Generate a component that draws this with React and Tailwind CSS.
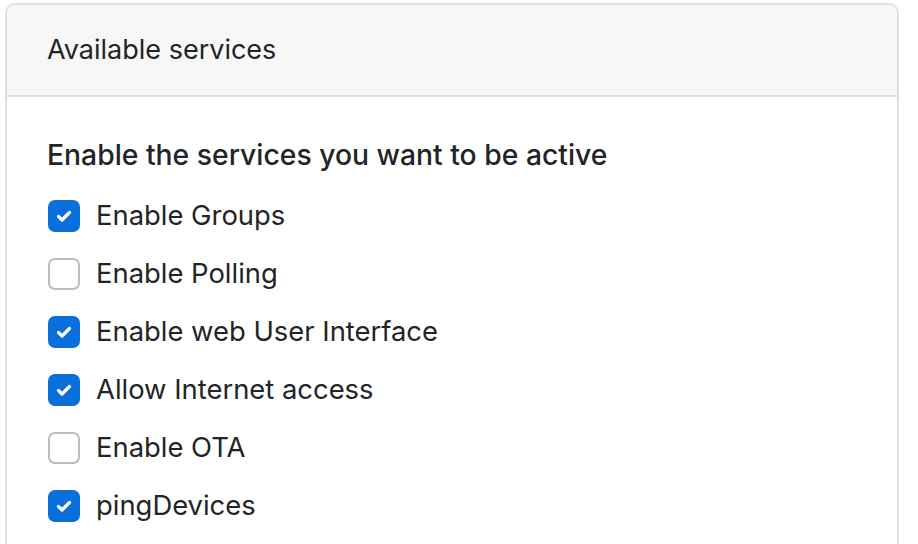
const services = [
  { id: 'groups', label: 'Enable Groups', checked: true },
  { id: 'polling', label: 'Enable Polling', checked: false },
  { id: 'webui', label: 'Enable web User Interface', checked: true },
  { id: 'internet', label: 'Allow Internet access', checked: true },
  { id: 'ota', label: 'Enable OTA', checked: false },
  { id: 'ping', label: 'pingDevices', checked: true },
];

function Check({ checked }) {
  if (!checked) {
    return <span className="w-[32px] h-[32px] rounded-[7px] border-2 border-[#b8bfc6] bg-white shrink-0" />;
  }
  return (
    <span className="w-[32px] h-[32px] rounded-[7px] bg-[#0b6fdb] flex items-center justify-center shrink-0">
      <svg width="18" height="18" viewBox="0 0 18 18" fill="none">
        <path d="M3.5 9.5l3.5 3.5 7.5-7.5" stroke="white" strokeWidth="3.2" strokeLinecap="round" strokeLinejoin="round" />
      </svg>
    </span>
  );
}

export default function App() {
  return (
    <div className="w-[918px] h-[544px] overflow-hidden bg-white text-[#212529]" style={{ fontFamily: 'Inter, "Noto Sans", sans-serif' }}>
      <div className="ml-[5px] mt-[3px] w-[894px] border-2 border-[#dfdfdf] rounded-[10px] overflow-hidden">
        <div className="h-[92px] bg-[#f7f7f7] border-b-2 border-[#dfdfdf] flex items-center px-[40px] text-[27px]">
          Available services
        </div>
        <div className="px-[40px] pt-[38px] pb-[20px]">
          <h3 className="text-[28.3px] font-medium leading-[40px]">Enable the services you want to be active</h3>
          <div className="mt-[12px]">
            {services.map((s) => (
              <label key={s.id} htmlFor={s.id} className="h-[58px] flex items-center gap-[16px] pl-[1px] text-[27.4px]">
                <Check checked={s.checked} />
                <span>{s.label}</span>
              </label>
            ))}
          </div>
        </div>
      </div>
    </div>
  );
}
